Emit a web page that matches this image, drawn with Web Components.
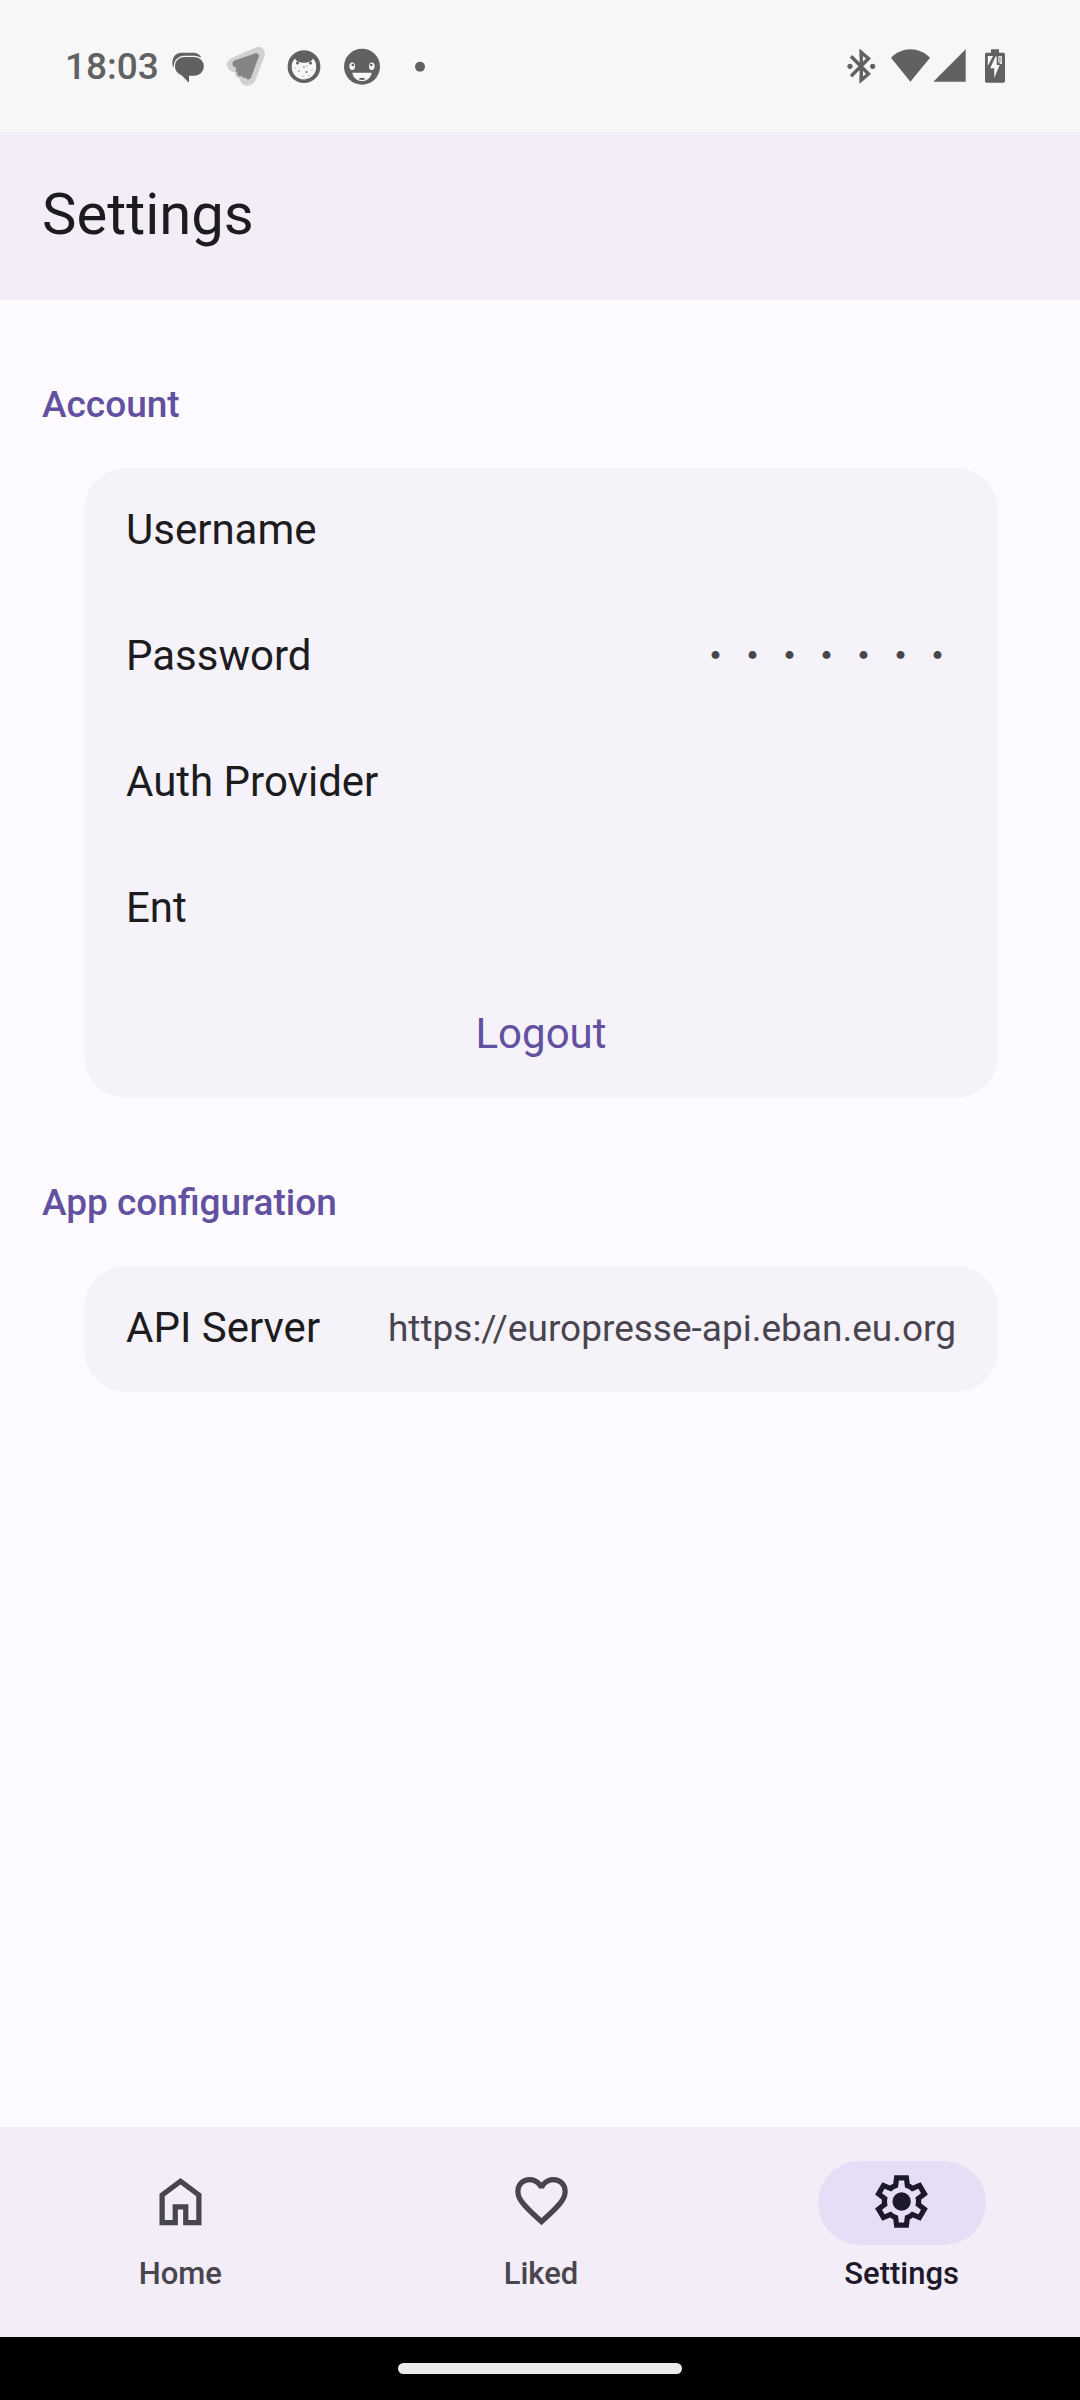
<!DOCTYPE html>
<html lang="en">
<head>
<meta charset="utf-8">
<meta name="viewport" content="width=device-width, initial-scale=1">
<title>Settings</title>
<style>
  :root {
    --surface: #fdfbff;
    --bar: #f3edf7;
    --card: #f5f2f9;
    --primary: #6250a0;
    --on-surface: #1c1b1e;
    --on-variant: #49454e;
    --pill: #e5def6;
    --on-pill: #1d192b;
    --status: #616161;
  }
  body { margin: 0; font-family: Roboto, "Liberation Sans", sans-serif; color: var(--on-surface); }
</style>
</head>
<body>
<settings-app></settings-app>

<script>
const define = (name, html) => {
  const template = document.createElement('template');
  template.innerHTML = html;
  customElements.define(name, class extends HTMLElement {
    constructor() {
      super();
      this.attachShadow({ mode: 'open' }).append(template.content.cloneNode(true));
    }
  });
};

define('status-bar', `
  <style>
    :host { display: flex; justify-content: space-between; align-items: center; height: 132px; box-sizing: border-box;
      padding: 2px 70px 0 65px; background: #f7f7f7; color: var(--status); }
    .group { display: flex; align-items: center; }
    .notes { gap: 16px; }
    time { font-size: 37px; line-height: 42px; font-weight: 500; margin-right: -8px; }
    svg { display: block; height: 42px; flex: none; fill: currentColor; }
  </style>
  <div class="group notes">
    <time>18:03</time>
    <svg width="42" viewBox="0 0 42 42" aria-hidden="true">
      <path d="M5.800 20.500C4 12.500 8 6.800 14.500 6.800h11.500c3.500 0 6.500 1.500 8 4.200L20 22z"/>
      <path stroke="#f7f7f7" stroke-width="2.400" paint-order="stroke" d="M17.500 11h10a9.300 9.300 0 0 1 0 18.700H22v7L14.500 29.200C10.500 27.800 8 24.500 8 20.300 8 15 12 11 17.500 11z"/>
    </svg>
    <svg width="42" viewBox="0 0 42 42" aria-hidden="true">
      <path fill="#d1d1d1" d="M6.500 12 30 1.800c6-2.500 11.500 2 9.500 8.200L30.500 34c-2.500 6.500-11 7.500-14.500 2.500l-1.500-4-4-2-.5-4C1 25.500-1 16 6.500 12z"/>
      <path fill="#848484" d="M9.500 14.500 30 7.500c2.800-.8 4.500 1 3.700 3.500L26 31.500c-1 2.500-4 2.500-5.500 0-1.500 1-3 0-3.500-1.500-3 1.500-5.500-1-4.500-3.500-2-.5-2.500-2.800-.8-4.500-5-1.500-5.500-5.500-2.200-7.500z"/>
    </svg>
    <svg width="42" viewBox="0 0 42 42" aria-hidden="true">
      <circle cx="21" cy="20.700" r="16.400"/>
      <path fill="#f7f7f7" d="M12 12.500c.8 1.800 2.200 3 4 3.300 2.500 1.400 7.500 1.400 10 0 1.800-.3 3.200-1.500 4-3.300 2 2 3.200 4.800 3.200 8.200A12.400 12.400 0 0 1 21 33.400 12.400 12.400 0 0 1 8.700 20.700c0-3.400 1.200-6.200 3.300-8.200z"/>
      <g><circle cx="14.500" cy="17" r="1.500"/><circle cx="27.500" cy="17" r="1.500"/><circle cx="21" cy="21" r=".8"/><circle cx="23.500" cy="26" r=".9"/><circle cx="16" cy="25" r=".7"/><circle cx="12" cy="22" r=".5"/><circle cx="29" cy="24" r=".5"/><circle cx="20" cy="30" r=".5"/><circle cx="26" cy="29.500" r=".5"/><circle cx="24" cy="20" r=".5"/></g>
    </svg>
    <svg width="42" viewBox="0 0 42 42" aria-hidden="true">
      <circle cx="21" cy="20.700" r="18"/>
      <g fill="#f7f7f7"><ellipse cx="11.200" cy="20.200" rx="2.800" ry="3.700"/><ellipse cx="30.800" cy="20.200" rx="2.800" ry="3.700"/>
      <path d="M11.300 26.700h19.400c-.8 5-4.700 8.300-9.700 8.300s-8.900-3.300-9.700-8.300z"/></g>
      <circle cx="11.800" cy="19" r="1.300"/><circle cx="30.200" cy="19" r="1.300"/>
      <path d="M17.500 33c2-1.600 5-1.600 7 0-2 1.200-5 1.200-7 0z"/>
    </svg>
    <svg width="42" viewBox="0 0 42 42" aria-hidden="true"><circle cx="21" cy="20.700" r="5"/></svg>
  </div>
  <div class="group">
    <svg width="45" viewBox="0 0 45 42" aria-hidden="true">
      <path fill="none" stroke="currentColor" stroke-width="3.400" d="M11 10.200 28.500 28 21.300 34V6.500l7.200 6L11 30.200"/>
      <circle cx="10" cy="20.300" r="2.600"/><circle cx="32.700" cy="20.300" r="2.600"/>
      <path d="M19.600 3.300l3.400 3v4h-3.400zM19.600 37l3.400-3v-4h-3.400z"/>
    </svg>
    <svg width="46" viewBox="0 0 46 42" aria-hidden="true"><path d="M6 11.700C17 .3 34 .3 45 11.700L25.400 35.700z"/></svg>
    <svg width="49" viewBox="0 0 49 42" aria-hidden="true"><path d="M34.700 3.300v32.400H2.300z"/></svg>
    <svg width="30" viewBox="0 0 30 42" aria-hidden="true">
      <path d="M11 3.300h8v3.400h4.300c1 0 1.700.7 1.700 1.700v26.600c0 1-.7 1.700-1.700 1.700H6.700c-1 0-1.700-.7-1.700-1.700V8.400c0-1 .7-1.700 1.700-1.700H11z"/>
      <path fill="#f7f7f7" d="M7.800 10h5.200L7.800 20zM15.500 10.500h1.200v8.500h3L14.200 32v-9.700h-4zM18.300 10h3.500v8h-1.500l-2-2z"/>
      <path d="M19.500 10.500h.9v6h-.9z"/>
    </svg>
  </div>`);

define('app-bar', `
  <style>
    :host { display: flex; align-items: center; height: 168px; box-sizing: border-box; padding: 0 42px 4px; background: var(--bar); }
    h1 { margin: 0; font-size: 58px; line-height: 72px; font-weight: 400; }
  </style>
  <h1><slot></slot></h1>`);

define('settings-section', `
  <style>
    :host { display: block; padding: 42px 82px 0 84px; }
    h2 { display: flex; align-items: center; margin: 0 -42px; height: 126px; font-size: 37px; line-height: 52px; font-weight: 500; color: var(--primary); }
    .card { display: flex; flex-direction: column; border-radius: 42px; overflow: hidden; background: var(--card); }
  </style>
  <section>
    <h2><slot name="title"></slot></h2>
    <div class="card"><slot></slot></div>
  </section>`);

define('settings-row', `
  <style>
    :host { display: flex; align-items: center; justify-content: space-between; gap: 42px; min-height: 126px; box-sizing: border-box; padding: 0 42px; }
    .label { font-size: 42px; line-height: 62px; padding-bottom: 2px; }
    .value { font-size: 37px; line-height: 52px; color: var(--on-variant); font-family: Roboto, "Noto Sans CJK JP", sans-serif; }
  </style>
  <span class="label"><slot></slot></span>
  <span class="value"><slot name="value"></slot></span>`);

define('action-row', `
  <style>
    :host { display: block; }
    button { display: block; width: 100%; min-height: 126px; border: 0; padding: 0 0 2px; background: none; font: inherit;
      font-size: 42px; line-height: 62px; color: var(--primary); }
  </style>
  <button type="button"><slot></slot></button>`);

define('nav-bar', `
  <style>
    :host { display: block; overflow: hidden; background: var(--bar); }
    nav { display: flex; margin-right: -2px; }
    ::slotted(*) { flex: 1; }
  </style>
  <nav><slot></slot></nav>`);

customElements.define('nav-item', class extends HTMLElement {
  constructor() {
    super();
    this.attachShadow({ mode: 'open' }).innerHTML = `
      <style>
        :host { display: block; color: var(--on-variant); }
        :host([selected]) { color: var(--on-pill); }
        a { display: flex; flex-direction: column; align-items: center; gap: 8px; padding: 34px 0 42px; color: inherit; text-decoration: none; }
        .pill { display: flex; align-items: center; justify-content: center; width: 168px; height: 84px; box-sizing: border-box; padding-bottom: 3px; border-radius: 42px; }
        :host([selected]) .pill { background: var(--pill); }
        .text { font-size: 31px; line-height: 42px; font-weight: 500; }
        ::slotted(svg) { width: 63px; height: 63px; fill: currentColor; }
      </style>
      <a href="${this.getAttribute('to') || '#'}"><span class="pill"><slot name="icon"></slot></span><span class="text"><slot></slot></span></a>`;
    if (this.hasAttribute('selected')) this.shadowRoot.querySelector('a').setAttribute('aria-current', 'page');
  }
});

define('gesture-bar', `
  <style>
    :host { display: flex; align-items: center; justify-content: center; height: 63px; background: #000; }
    span { width: 284px; height: 11px; border-radius: 6px; background: #ebebeb; }
  </style>
  <span></span>`);

define('settings-app', `
  <style>
    :host { display: flex; flex-direction: column; min-height: 100vh; background: var(--surface); }
    main { flex: 1; }
  </style>
  <status-bar></status-bar>
  <app-bar>Settings</app-bar>
  <main>
    <settings-section>
      <span slot="title">Account</span>
      <settings-row>Username</settings-row>
      <settings-row>Password<span slot="value">・・・・・・・</span></settings-row>
      <settings-row>Auth Provider</settings-row>
      <settings-row>Ent</settings-row>
      <action-row>Logout</action-row>
    </settings-section>
    <settings-section>
      <span slot="title">App configuration</span>
      <settings-row>API Server<span slot="value">https://europresse-api.eban.eu.org</span></settings-row>
    </settings-section>
  </main>
  <nav-bar>
    <nav-item to="#home">
      <svg slot="icon" viewBox="0 0 24 24" aria-hidden="true"><path d="M6 19h3v-6h6v6h3v-9l-6-4.500L6 10zm-2 2V9l8-6 8 6v12h-7v-6h-2v6z"/></svg>Home</nav-item>
    <nav-item to="#liked">
      <svg slot="icon" viewBox="0 0 24 24" aria-hidden="true"><path d="m12 21-1.450-1.300q-2.525-2.275-4.175-3.925T3.750 12.812 2.388 10.400 2 8.150Q2 5.800 3.575 4.225T7.500 2.650q1.300 0 2.475.55T12 4.750q.85-1 2.025-1.550t2.475-.55q2.350 0 3.925 1.575T22 8.150q0 1.150-.387 2.250t-1.363 2.412-2.625 2.963T13.450 19.700zm0-2.700q2.400-2.150 3.950-3.687t2.450-2.675 1.250-2.026.35-1.762q0-1.500-1-2.500t-2.500-1q-1.175 0-2.175.662T12.950 7h-1.900q-.375-.95-1.375-1.612T7.500 4.650q-1.500 0-2.500 1t-1 2.500q0 .875.35 1.763t1.250 2.025 2.450 2.675T12 18.300"/></svg>Liked</nav-item>
    <nav-item to="#settings" selected>
      <svg slot="icon" viewBox="0 0 24 24" aria-hidden="true"><path d="m9.250 22-.4-3.200q-.325-.125-.612-.3t-.563-.375L4.700 19.375l-2.750-4.750 2.575-1.950Q4.500 12.500 4.500 12.337v-.675q0-.162.025-.337L1.950 9.375l2.750-4.750 2.975 1.250q.275-.2.575-.375t.6-.3l.4-3.200h5.500l.4 3.200q.325.125.613.3t.562.375l2.975-1.250 2.750 4.750-2.575 1.950q.025.175.025.338v.674q0 .163-.05.338l2.575 1.950-2.750 4.750-2.950-1.250q-.275.2-.575.375t-.6.3l-.4 3.200zM11 20h1.975l.35-2.650q.775-.2 1.438-.587t1.212-.938l2.475 1.025.975-1.700-2.150-1.625q.125-.35.175-.737T17.500 12t-.05-.787-.175-.738l2.150-1.625-.975-1.700-2.475 1.050q-.55-.575-1.212-.962t-1.438-.588L13 4h-1.975l-.35 2.650q-.775.2-1.437.588t-1.213.937L5.550 7.150l-.975 1.700 2.150 1.600q-.125.375-.175.750t-.05.8q0 .4.05.775t.175.75l-2.150 1.625.975 1.700 2.475-1.050q.55.575 1.213.963t1.437.587z"/><circle cx="12.050" cy="12" r="3.500"/></svg>Settings</nav-item>
  </nav-bar>
  <gesture-bar></gesture-bar>`);
</script>
</body>
</html>
